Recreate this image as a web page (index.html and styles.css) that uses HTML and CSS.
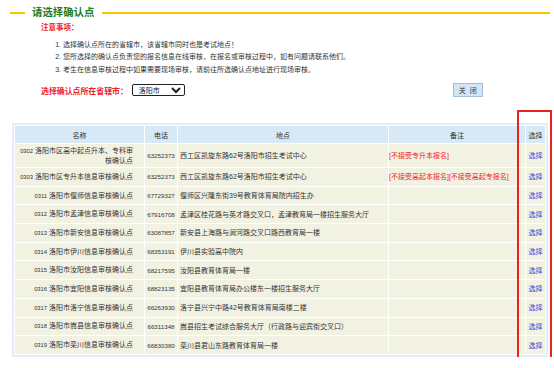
FILE: index.html
```html
<!DOCTYPE html>
<html lang="zh-CN">

<head>
    <meta charset="UTF-8">
    <meta name="viewport" content="width=device-width, initial-scale=1.0">
    <title>请选择确认点</title>
    <link rel="stylesheet" href="styles.css">
</head>

<body>
    <div class="page">
        <!-- 标题 -->
        <div class="title-bar">
            <span class="title-line short"></span>
            <h1 class="title">请选择确认点</h1>
            <span class="title-line long"></span>
        </div>

        <!-- 注意事项 -->
        <p class="notice-title">注意事项：</p>
        <ol class="notice-list">
            <li>选择确认点所在的省辖市，该省辖市同时也是考试地点！</li>
            <li>您所选择的确认点负责您的报名信息在线审核，在报名或审核过程中，如有问题请联系他们。</li>
            <li>考生在信息审核过程中如果需要现场审核，请前往所选确认点地址进行现场审核。</li>
        </ol>

        <!-- 省辖市选择 -->
        <div class="filter-row">
            <label class="filter-label" for="city">选择确认点所在省辖市：</label>
            <select id="city" class="city-select">
                <option>洛阳市</option>
                <option>郑州市</option>
                <option>开封市</option>
            </select>
            <button class="close-btn" type="button">关&nbsp;&nbsp;闭</button>
        </div>

        <!-- 确认点列表 -->
        <div class="table-wrap">
            <table class="site-table">
                <colgroup>
                    <col class="col-name">
                    <col class="col-phone">
                    <col class="col-addr">
                    <col class="col-note">
                    <col class="col-pick">
                </colgroup>
                <thead>
                    <tr>
                        <th>名称</th>
                        <th>电话</th>
                        <th>地点</th>
                        <th>备注</th>
                        <th>选择</th>
                    </tr>
                </thead>
                <tbody>
                    <tr>
                        <td class="name"><span class="code">0302</span> 洛阳市区高中起点升本、专科审核确认点</td>
                        <td class="phone">63252373</td>
                        <td>西工区凯旋东路62号洛阳市招生考试中心</td>
                        <td class="note">[不接受专升本报名]</td>
                        <td class="pick"><a href="#">选择</a></td>
                    </tr>
                    <tr>
                        <td class="name"><span class="code">0303</span> 洛阳市区专升本信息审核确认点</td>
                        <td class="phone">63252373</td>
                        <td>西工区凯旋东路62号洛阳市招生考试中心</td>
                        <td class="note">[不接受高起本报名][不接受高起专报名]</td>
                        <td class="pick"><a href="#">选择</a></td>
                    </tr>
                    <tr>
                        <td class="name"><span class="code">0311</span> 洛阳市偃师信息审核确认点</td>
                        <td class="phone">67729327</td>
                        <td>偃师区兴隆东街39号教育体育局院内招生办</td>
                        <td class="note"></td>
                        <td class="pick"><a href="#">选择</a></td>
                    </tr>
                    <tr>
                        <td class="name"><span class="code">0312</span> 洛阳市孟津信息审核确认点</td>
                        <td class="phone">67916708</td>
                        <td>孟津区桂花路与英才路交叉口，孟津教育局一楼招生服务大厅</td>
                        <td class="note"></td>
                        <td class="pick"><a href="#">选择</a></td>
                    </tr>
                    <tr>
                        <td class="name"><span class="code">0313</span> 洛阳市新安信息审核确认点</td>
                        <td class="phone">63087857</td>
                        <td>新安县上海路与涧河路交叉口路西教育局一楼</td>
                        <td class="note"></td>
                        <td class="pick"><a href="#">选择</a></td>
                    </tr>
                    <tr>
                        <td class="name"><span class="code">0314</span> 洛阳市伊川信息审核确认点</td>
                        <td class="phone">68353191</td>
                        <td>伊川县实验高中院内</td>
                        <td class="note"></td>
                        <td class="pick"><a href="#">选择</a></td>
                    </tr>
                    <tr>
                        <td class="name"><span class="code">0315</span> 洛阳市汝阳信息审核确认点</td>
                        <td class="phone">68217595</td>
                        <td>汝阳县教育体育局一楼</td>
                        <td class="note"></td>
                        <td class="pick"><a href="#">选择</a></td>
                    </tr>
                    <tr>
                        <td class="name"><span class="code">0316</span> 洛阳市宜阳信息审核确认点</td>
                        <td class="phone">68823135</td>
                        <td>宜阳县教育体育局办公楼东一楼招生服务大厅</td>
                        <td class="note"></td>
                        <td class="pick"><a href="#">选择</a></td>
                    </tr>
                    <tr>
                        <td class="name"><span class="code">0317</span> 洛阳市洛宁信息审核确认点</td>
                        <td class="phone">66263930</td>
                        <td>洛宁县兴宁中路42号教育体育局南楼二楼</td>
                        <td class="note"></td>
                        <td class="pick"><a href="#">选择</a></td>
                    </tr>
                    <tr>
                        <td class="name"><span class="code">0318</span> 洛阳市嵩县信息审核确认点</td>
                        <td class="phone">66311348</td>
                        <td>嵩县招生考试综合服务大厅（行政路与迎宾街交叉口）</td>
                        <td class="note"></td>
                        <td class="pick"><a href="#">选择</a></td>
                    </tr>
                    <tr>
                        <td class="name"><span class="code">0319</span> 洛阳市栾川信息审核确认点</td>
                        <td class="phone">66830380</td>
                        <td>栾川县君山东路教育体育局一楼</td>
                        <td class="note"></td>
                        <td class="pick"><a href="#">选择</a></td>
                    </tr>
                </tbody>
            </table>

            <!-- 红框标注 -->
            <div class="highlight"></div>
        </div>
    </div>
</body>

</html>
```

FILE: styles.css
```css
/* General */
body {
    margin: 0;
    background: #fff;
    font-family: "Liberation Sans", "Noto Sans CJK SC", sans-serif;
    font-size: 7px;
    color: #333;
}

.page {
    padding: 6px 4px 0 10px;
}

/* Title */
.title-bar {
    display: flex;
    align-items: center;
    height: 14px;
}

.title-line {
    height: 2px;
    background: #f6c500;
}

.title-line.short {
    width: 15px;
}

.title-line.long {
    flex: 1;
}

.title {
    margin: 0 8px 0 7px;
    font-size: 10.4px;
    line-height: 14px;
    font-weight: bold;
    color: #1e7a1e;
}

/* Notice */
.notice-title {
    margin: 3px 0 0 31px;
    font-size: 7.5px;
    line-height: 10px;
    font-weight: bold;
    color: #ee1c25;
}

.notice-list {
    margin: 5.75px 0 0;
    padding-left: 53px;
    line-height: 12.5px;
    color: #333;
}

/* Filter row */
.filter-row {
    display: flex;
    align-items: center;
    height: 14px;
    margin-top: 6.75px;
    padding-left: 31px;
}

.filter-label {
    font-size: 7.9px;
    font-weight: bold;
    color: #ee1c25;
    margin-right: 4px;
}

.city-select {
    width: 53px;
    height: 12px;
    padding: 0 0 0 2px;
    font-family: inherit;
    font-size: 7px;
    border: 1px solid #222;
    border-radius: 2px;
    background: #fff;
    color: #222;
}

.close-btn {
    margin-left: 268px;
    width: 30px;
    height: 14px;
    padding: 0;
    font-family: inherit;
    font-size: 7px;
    color: #333;
    background: #d4e6f6;
    border: 1px solid #a3bdd6;
}

/* Table */
.table-wrap {
    position: relative;
    width: 536px;
    margin: 26px 0 0 2px;
}

.site-table {
    width: 536px;
    table-layout: fixed;
    border: 2px solid #e2eef9;
    border-spacing: 1px;
    background: #fff;
}

.col-name { width: 129px; }
.col-phone { width: 32px; }
.col-addr { width: 210px; }
.col-note { width: 136px; }
.col-pick { width: 19px; }

.site-table th {
    height: 17px;
    padding: 0;
    font-weight: normal;
    background: #d7e9f7;
    color: #333;
}

.site-table tbody tr {
    height: 17.7px;
}

.site-table td {
    padding: 2px 1px 2px 2px;
    line-height: 9px;
    background: #f2f2e3;
    color: #333;
    white-space: normal;
}

.site-table td.name {
    text-align: right;
    padding-right: 11px;
}

.code {
    font-size: 5.8px;
}

.site-table td.phone {
    font-size: 6.2px;
    text-align: center;
    padding: 0;
}

.site-table td.note {
    color: #f0262a;
    padding-left: 0;
}

.site-table td.pick {
    text-align: center;
    padding: 0;
}

.pick a {
    color: #3c3cdc;
    text-decoration: none;
}

/* Red annotation box */
.highlight {
    position: absolute;
    left: 505px;
    top: -13px;
    width: 35px;
    height: 249px;
    box-sizing: border-box;
    border: 2px solid #e8231b;
}
```
